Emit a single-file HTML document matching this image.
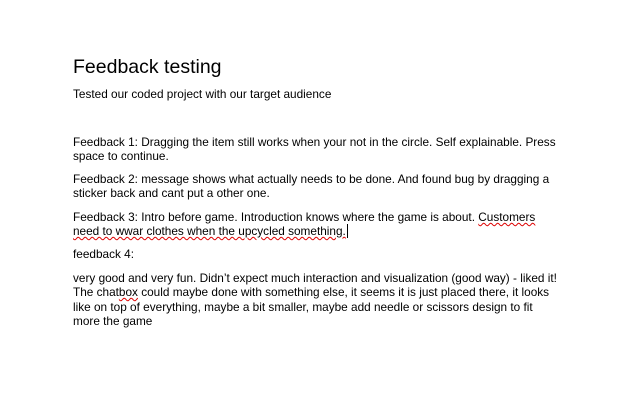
<html><head><style>
body{margin:0;width:632px;height:405px;background:#fff;font-family:"Liberation Sans",Arial,sans-serif;color:#000;position:relative;overflow:hidden}
div{position:absolute;left:73px;white-space:nowrap;font-size:11.8px;line-height:14px}
.sq{text-decoration:underline wavy #d00;text-decoration-thickness:1px;text-underline-offset:1px}
</style></head><body>
<div style="top:55px;font-size:19.5px;line-height:24px">Feedback testing</div>
<div style="top:87px">Tested our coded project with our target audience</div>
<div style="top:135px">Feedback 1: Dragging the item still works when your not in the circle. Self explainable. Press</div>
<div style="top:149px">space to continue.</div>
<div style="top:172px">Feedback 2: message shows what actually needs to be done. And found bug by dragging a</div>
<div style="top:186px">sticker back and cant put a other one.</div>
<div style="top:210px">Feedback 3: Intro before game. Introduction knows where the game is about. <span class="sq">Customers</span></div>
<div style="top:224px"><span class="sq">need to wwar clothes when the upcycled something.</span><span style="border-left:1px solid #000;margin-left:1px"></span></div>
<div style="top:247px">feedback 4:</div>
<div style="top:271px">very good and very fun. Didn’t expect much interaction and visualization (good way) - liked it!</div>
<div style="top:285px">The chat<span class="sq">box</span> could maybe done with something else, it seems it is just placed there, it looks</div>
<div style="top:300px">like on top of everything, maybe a bit smaller, maybe add needle or scissors design to fit</div>
<div style="top:314px">more the game</div>
</body></html>
